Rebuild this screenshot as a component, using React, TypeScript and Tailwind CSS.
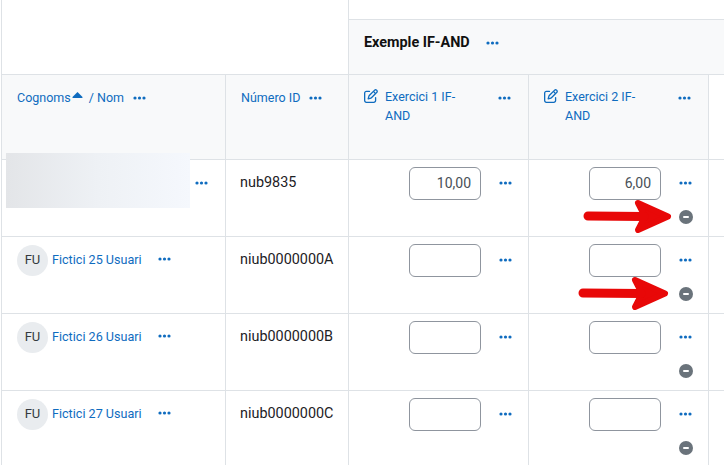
import React from 'react';
import { FaRegPenToSquare } from 'react-icons/fa6';

const Dots: React.FC = () => (
  <svg width="13" height="4" viewBox="0 0 13 4" className="shrink-0 text-[#0f6cbf]" fill="currentColor">
    <circle cx="2" cy="2" r="1.6" />
    <circle cx="6.5" cy="2" r="1.6" />
    <circle cx="11" cy="2" r="1.6" />
  </svg>
);

const Arrow: React.FC<{ className: string; tail: number }> = ({ className, tail }) => (
  <svg width="96" height="40" viewBox="0 0 96 40" className={`absolute ${className}`}>
    <path
      d={`M${tail} 20 L60 20.5 M58 7 L88 20.5 L58 34 L65 20.5 Z`}
      fill="#e80808"
      stroke="#e80808"
      strokeWidth="6"
      strokeLinejoin="round"
      strokeLinecap="round"
    />
    <path d={`M${tail} 20 L64 20.5`} stroke="#e80808" strokeWidth="9" strokeLinecap="round" />
  </svg>
);

const GradeCell: React.FC<{ value?: string; minus?: boolean }> = ({ value, minus }) => (
  <div className="w-[180px] h-full border-r border-[#dee2e6] pt-[7px] pl-[60px] shrink-0">
    <div className="flex items-start">
      <div className="w-[72px] h-[33px] border border-[#8f959e] rounded-[6px] text-right pr-[9px] text-[14px] leading-[31px] text-[#495057]">
        {value}
      </div>
      <div className="ml-[18px] mt-[14px]">
        <Dots />
      </div>
    </div>
    {minus && (
      <div className="ml-[90px] mt-[10px] w-[14px] h-[14px] rounded-full bg-[#6a737b] flex items-center justify-center">
        <div className="w-[6px] h-[2px] bg-white rounded-sm" />
      </div>
    )}
  </div>
);

const ExerciseHeader: React.FC<{ title: string }> = ({ title }) => (
  <div className="w-[180px] h-full border-r border-[#dee2e6] bg-[#f8f9fa] pl-[15px] pt-[12px] shrink-0 flex items-start text-[#0f6cbf]">
    <FaRegPenToSquare className="mt-[2px] w-[14px] h-[14px] shrink-0" />
    <div className="w-[84px] ml-[7px] text-[12.5px] leading-[19px]">{title}</div>
    <div className="ml-[29px] mt-[9px]">
      <Dots />
    </div>
  </div>
);

const StudentRow: React.FC<{ name: string; id: string; value?: string; value2?: string }> = ({ name, id, value, value2 }) => (
  <div className="flex h-[77px] border-b border-[#dee2e6]">
    <div className="w-[224px] h-full border-r border-[#dee2e6] pl-[15px] pt-2 shrink-0 flex items-start">
      {name && (
        <>
          <div className="w-[31px] h-[31px] rounded-full bg-[#e9ecef] flex items-center justify-center pb-px text-[13px] text-[#343a40]">
            FU
          </div>
          <a className="ml-1 mt-[6px] text-[12.6px] leading-[17px] text-[#0f6cbf]">{name}</a>
          <div className="ml-[16px] mt-[12px]">
            <Dots />
          </div>
        </>
      )}
    </div>
    <div className="w-[123px] h-full border-r border-[#dee2e6] pl-[14px] pt-[14px] text-[14.4px] leading-[18px] text-[#1d2125] shrink-0">
      {id}
    </div>
    <GradeCell value={value} />
    <GradeCell value={value2} minus />
  </div>
);

export default function App() {
  return (
    <div className="relative w-[724px] h-[465px] overflow-hidden bg-white pl-px font-['Roboto',sans-serif]">
      <div className="w-[800px] border-l border-[#dee2e6]">
        {/* cap header */}
        <div className="flex h-[75px] border-b border-[#dee2e6]">
          <div className="w-[347px] border-r border-[#dee2e6] shrink-0" />
          <div className="flex-1">
            <div className="h-[20px] border-b border-[#dee2e6]" />
            <div className="h-[54px] bg-[#f8f9fa] pl-[15px] pt-[13px] flex items-start">
              <span className="text-[14.4px] leading-[20px] font-bold text-[#111]">Exemple IF-AND</span>
              <div className="ml-[16px] mt-[8px]">
                <Dots />
              </div>
            </div>
          </div>
        </div>

        {/* column titles */}
        <div className="flex h-[85px] border-b border-[#dee2e6]">
          <div className="w-[224px] h-full border-r border-[#dee2e6] bg-[#f8f9fa] pl-[15px] pt-[14px] shrink-0 flex items-start text-[12.5px] leading-[18px] text-[#0f6cbf]">
            <span>Cognoms</span>
            <svg width="11" height="6" viewBox="0 0 11 6" className="mt-[3px] mx-[1px]" fill="currentColor">
              <path d="M5.5 0 L10.5 5 Q10.8 6 10 6 L1 6 Q0.2 6 0.5 5 Z" />
            </svg>
            <span className="ml-[5px]">/ Nom</span>
            <div className="ml-[9px] mt-[7px]">
              <Dots />
            </div>
          </div>
          <div className="w-[123px] h-full border-r border-[#dee2e6] bg-[#f8f9fa] pl-[15px] pt-[14px] shrink-0 flex items-start text-[12.5px] leading-[18px] text-[#0f6cbf]">
            <span>Número ID</span>
            <div className="ml-[9px] mt-[7px]">
              <Dots />
            </div>
          </div>
          <ExerciseHeader title="Exercici 1 IF-AND" />
          <ExerciseHeader title="Exercici 2 IF-AND" />
        </div>

        {/* students */}
        <StudentRow name="" id="nub9835" value="10,00" value2="6,00" />
        <StudentRow name="Fictici 25 Usuari" id="niub0000000A" />
        <StudentRow name="Fictici 26 Usuari" id="niub0000000B" />
        <StudentRow name="Fictici 27 Usuari" id="niub0000000C" />
      </div>

      {/* censored name and its menu, over the first row */}
      <div className="absolute left-[6px] top-[153px] w-[184px] h-[55px] bg-gradient-to-r from-[#e3e5e8] via-[#eef1f5] to-[#f5f8fd]" />
      <div className="absolute left-[195px] top-[181px]">
        <Dots />
      </div>

      {/* annotation arrows */}
      <Arrow className="left-[580px] top-[196px]" tail={8} />
      <Arrow className="left-[577px] top-[273px]" tail={6} />
    </div>
  );
}
